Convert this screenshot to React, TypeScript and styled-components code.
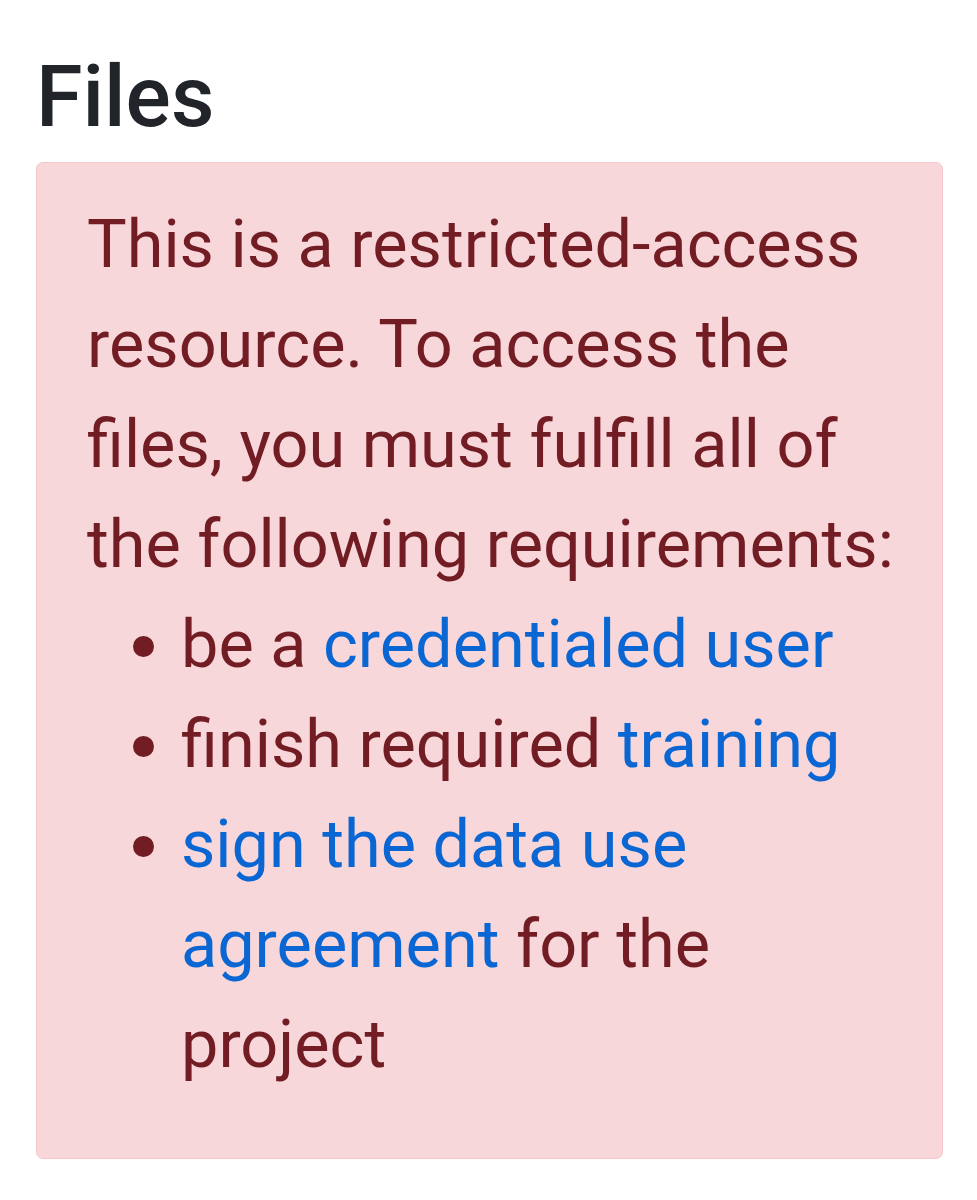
import { createGlobalStyle } from "styled-components";
import styled from "styled-components";

const GlobalStyle = createGlobalStyle`
  body {
    margin: 0;
    background: #fff;
    font-family: Roboto, "Liberation Sans", sans-serif;
  }
`;

const Page = styled.main`
  padding: 47px 34px 0 36px;
`;

const Title = styled.h2`
  margin: 0 0 14px 0;
  font-size: 84.5px;
  font-weight: 500;
  line-height: 1.2;
  color: #212529;
`;

const Alert = styled.div`
  box-sizing: border-box;
  width: 907px;
  padding: 31px 36px 30px 50px;
  background: #f8d7da;
  border: 1px solid #f5c6cb;
  border-radius: 7px;
  color: #721c24;
  font-size: 66.6px;
  line-height: 100px;
`;

const Text = styled.p`
  margin: 0;
`;

const List = styled.ul`
  margin: 0 0 34px 0;
  padding-left: 94px;
`;

const Link = styled.a`
  color: #0a66d2;
  text-decoration: none;
`;

export default function App() {
  return (
    <>
      <GlobalStyle />
      <Page>
        <Title>Files</Title>
        <Alert>
          <Text>
            This is a restricted-access resource. To access the files, you must fulfill all of the
            following requirements:
          </Text>
          <List>
            <li>
              be a <Link href="#">credentialed user</Link>
            </li>
            <li>
              finish required <Link href="#">training</Link>
            </li>
            <li>
              <Link href="#">sign the data use agreement</Link> for the project
            </li>
          </List>
        </Alert>
      </Page>
    </>
  );
}
